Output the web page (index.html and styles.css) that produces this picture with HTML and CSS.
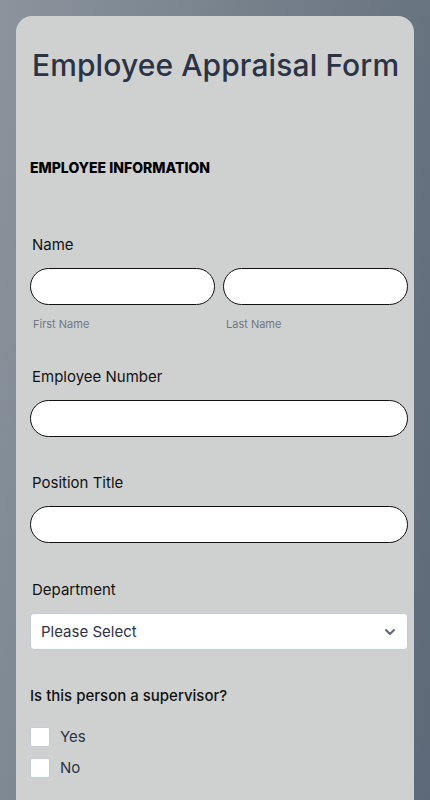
FILE: index.html
```html
<!DOCTYPE html>
<html lang="en">
<head>
<meta charset="utf-8">
<title>Employee Appraisal Form</title>
<link rel="stylesheet" href="styles.css">
</head>
<body>
<main class="card">
  <h1 class="title">Employee Appraisal Form</h1>
  <h2 class="section">EMPLOYEE INFORMATION</h2>

  <div class="field">
    <label class="label">Name</label>
    <div class="name-row">
      <div class="name-col">
        <input class="pill" type="text">
        <span class="sub">First Name</span>
      </div>
      <div class="name-col">
        <input class="pill" type="text">
        <span class="sub">Last Name</span>
      </div>
    </div>
  </div>

  <div class="field">
    <label class="label">Employee Number</label>
    <input class="pill" type="text">
  </div>

  <div class="field">
    <label class="label">Position Title</label>
    <input class="pill" type="text">
  </div>

  <div class="field">
    <label class="label">Department</label>
    <div class="select">
      <span>Please Select</span>
      <svg class="chev" width="12" height="8" viewBox="0 0 12 8"><path d="M2 2l4 4 4-4" fill="none" stroke="#5d6778" stroke-width="2" stroke-linecap="round" stroke-linejoin="round"/></svg>
    </div>
  </div>

  <div class="field">
    <p class="question">Is this person a supervisor?</p>
    <div class="options">
      <label class="opt"><span class="box"></span>Yes</label>
      <label class="opt"><span class="box"></span>No</label>
    </div>
  </div>
</main>
</body>
</html>
```

FILE: styles.css
```css
* { box-sizing: border-box; }
html, body { height: 100%; }
body {
  margin: 0;
  padding: 16px 16px 0 16px;
  font-family: Inter, "Noto Sans", sans-serif;
  background: linear-gradient(100deg, #8b949d 0%, #76808b 45%, #5d6978 100%);
  overflow: hidden;
}
.card {
  background: #cfd1d1;
  border-radius: 16px 16px 0 0;
  min-height: 900px;
  padding: 30px 6px 0 14px;
}
.title {
  margin: 0 0 0 2px;
  font-size: 30px;
  font-weight: 500;
  color: #2c3345;
  line-height: 38px;
  letter-spacing: 0.1px;
}
.section {
  margin: 75px 0 0 0;
  font-size: 14px;
  font-weight: 800;
  letter-spacing: 0;
  color: #000;
  line-height: 18px;
}
.field { margin-top: 59px; }
.field + .field { margin-top: 0; }
.label {
  display: block;
  margin-left: 2px;
  font-size: 15px;
  color: #111;
  line-height: 18px;
}
.name-row {
  display: flex;
  gap: 8px;
  margin-top: 14px;
}
.name-col { flex: 1; display: flex; flex-direction: column; }
.pill {
  display: block;
  width: 100%;
  height: 37px;
  border: 1px solid #111;
  border-radius: 19px;
  background: #fff;
  margin: 0;
  padding: 0 12px;
  font: inherit;
}
.field > .pill { margin-top: 14px; }
.sub {
  margin: 12px 0 0 3px;
  font-size: 11px;
  color: #6f7682;
  line-height: 14px;
}
.field:nth-of-type(1) { padding-bottom: 37px; }
.field:nth-of-type(2) { padding-bottom: 37px; }
.field:nth-of-type(3) { padding-bottom: 38px; }
.select {
  margin-top: 14px;
  height: 37px;
  background: #fff;
  border: 1px solid #c3cad8;
  border-radius: 4px;
  display: flex;
  align-items: center;
  justify-content: space-between;
  padding: 0 11px 0 10px;
  font-size: 15px;
  color: #2c3345;
}
.field:nth-of-type(4) { padding-bottom: 37px; }
.question {
  margin: 0;
  font-size: 15px;
  font-weight: 500;
  color: #111;
  line-height: 18px;
}
.options { margin-top: 22px; display: flex; flex-direction: column; gap: 11px; }
.opt {
  display: flex;
  align-items: center;
  gap: 10px;
  font-size: 15px;
  color: #2c3345;
  line-height: 20px;
}
.box {
  width: 20px;
  height: 20px;
  background: #fff;
  border: 1px solid #c3cad8;
  border-radius: 2px;
}
```
